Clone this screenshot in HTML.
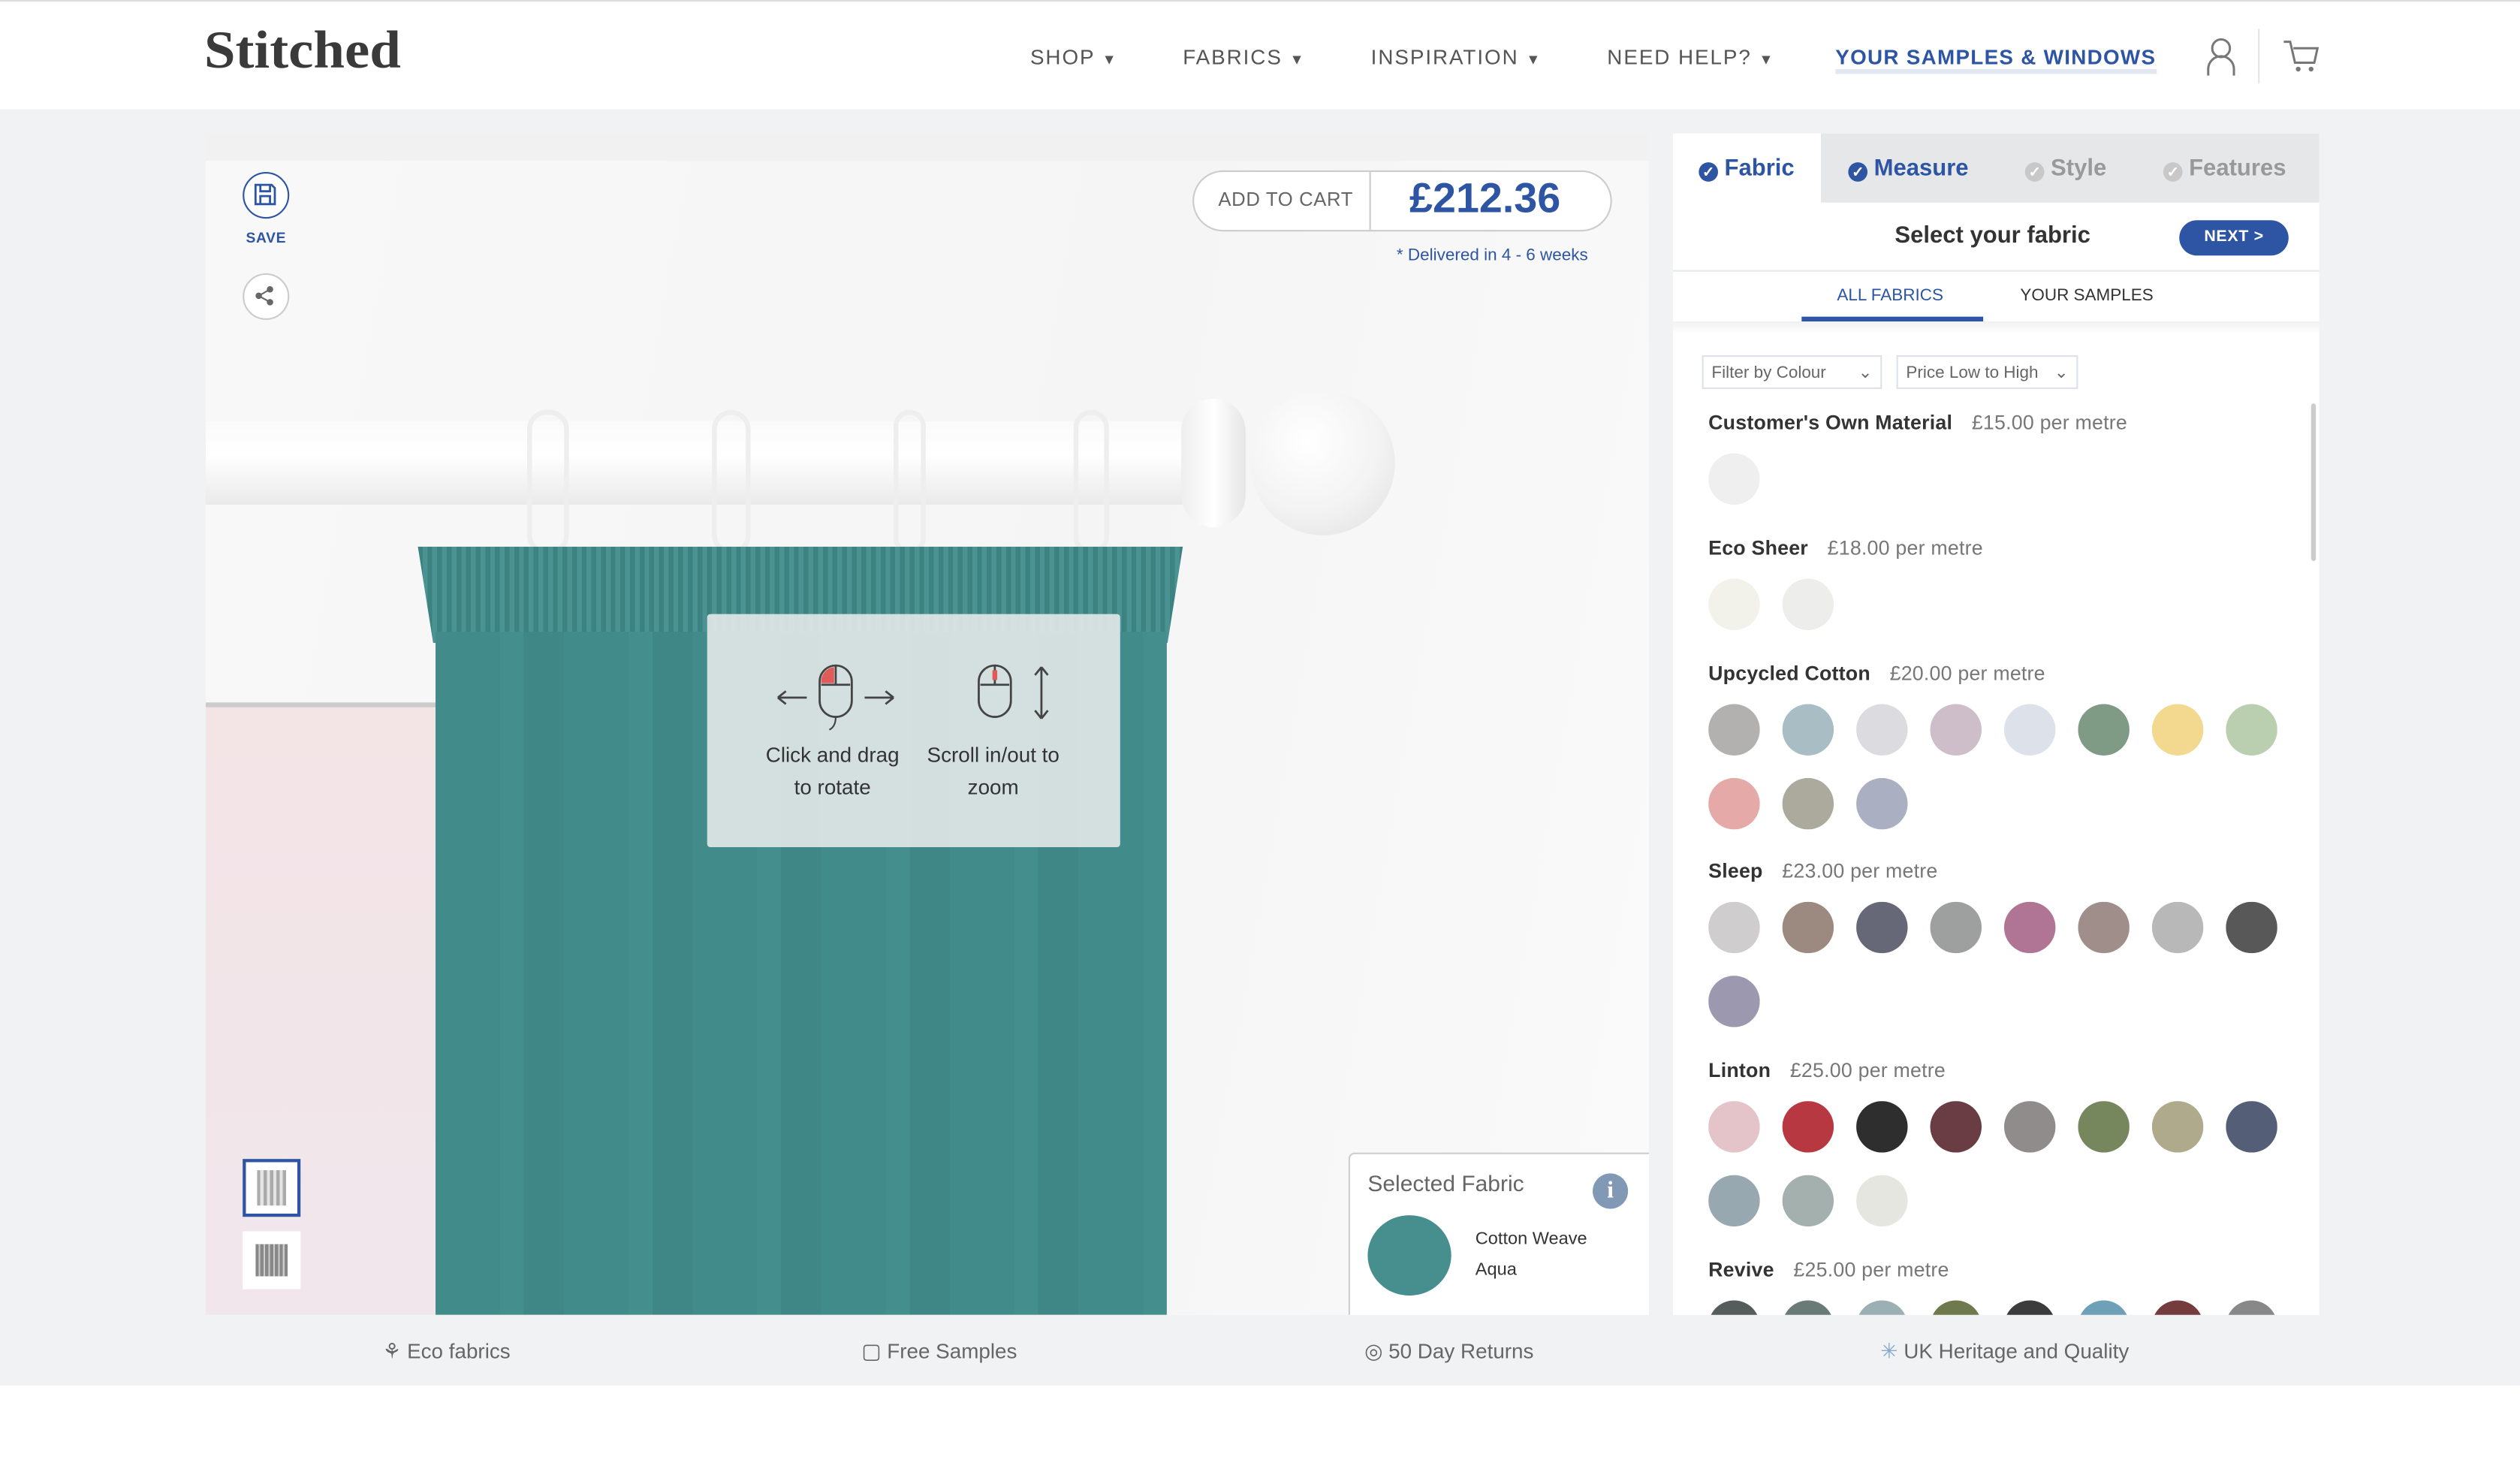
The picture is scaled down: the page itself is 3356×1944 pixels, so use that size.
<!DOCTYPE html>
<html><head><meta charset="utf-8"><style>
html,body{margin:0;padding:0;width:3356px;height:1944px;overflow:hidden;background:#fff}
#w{position:absolute;left:0;top:0;width:1568px;height:908px;transform:scale(2.14031);transform-origin:0 0;font-family:"Liberation Sans",sans-serif;color:#333}
.a{position:absolute}
.nav{font-size:13px;letter-spacing:.9px;color:#555;top:28px}
.sw{position:absolute;width:32px;height:32px;border-radius:50%}
.h{position:absolute;left:1063px;font-size:12.5px;font-weight:bold;color:#333;letter-spacing:.1px}
.h span{font-weight:normal;color:#777;margin-left:12px}
.ft{position:absolute;top:833px;font-size:13px;color:#666}
.ck{display:inline-block;width:12px;height:12px;border-radius:50%;vertical-align:-1px;margin-right:4px;color:#fff;font-size:9px;line-height:12px;text-align:center}
</style></head><body><div id="w">
<div class="a" style="left:0;top:0;width:1568px;height:1px;background:#ddd"></div>
<div class="a" style="left:0;top:68px;width:1568px;height:794px;background:#f1f2f4"></div>
<div class="a" style="left:127px;top:14px;font-family:'Liberation Serif',serif;font-weight:bold;font-size:33px;color:#3a3a3a;letter-spacing:0px;transform:scaleX(1.06);transform-origin:0 0">Stitched</div>
<div class="a nav" style="left:641px">SHOP <span style="font-size:9px">▼</span></div>
<div class="a nav" style="left:736px">FABRICS <span style="font-size:9px">▼</span></div>
<div class="a nav" style="left:853px">INSPIRATION <span style="font-size:9px">▼</span></div>
<div class="a nav" style="left:1000px">NEED HELP? <span style="font-size:9px">▼</span></div>
<div class="a nav" style="left:1142px;color:#2d55a3;font-weight:bold;border-bottom:3px solid #e2e8f2;letter-spacing:.6px">YOUR SAMPLES &amp; WINDOWS</div>
<svg class="a" style="left:1372px;top:22px" width="20" height="26"><circle cx="10" cy="8" r="5.5" fill="none" stroke="#777" stroke-width="1.4"/><path d="M2 25v-4a8 8 0 0 1 16 0v4" fill="none" stroke="#777" stroke-width="1.4"/></svg>
<div class="a" style="left:1405px;top:18px;width:1px;height:34px;background:#e5e5e5"></div>
<svg class="a" style="left:1420px;top:24px" width="24" height="22"><path d="M1 2h4l3 13h12l2-9H7" fill="none" stroke="#777" stroke-width="1.4"/><circle cx="10" cy="19" r="1.5" fill="#777"/><circle cx="18" cy="19" r="1.5" fill="#777"/></svg>

<!-- left panel -->
<div class="a" style="left:128px;top:83px;width:898px;height:735px;background:linear-gradient(100deg,#f8f8f8,#f5f5f5 60%,#fafafa);overflow:hidden">
 <div class="a" style="left:0;top:0;width:898px;height:17px;background:#f1f1f2"></div>
 <div class="a" style="left:0;top:355px;width:145px;height:380px;background:linear-gradient(#f3e4e6,#f0e6ec)"></div>
 <div class="a" style="left:0;top:354px;width:145px;height:3px;background:#ccc"></div>
 <div class="a" style="left:0;top:179px;width:620px;height:52px;background:linear-gradient(#fafafa,#fff 40%,#eaeaea);border-radius:0 10px 10px 0"></div>
 <div class="a" style="left:607px;top:165px;width:40px;height:80px;background:linear-gradient(90deg,#eee,#fff,#e6e6e6);border-radius:20px"></div>
 <div class="a" style="left:650px;top:160px;width:90px;height:90px;border-radius:50%;background:radial-gradient(circle at 40% 35%,#fff,#f3f3f3 55%,#dedede)"></div>
 <div class="a" style="left:200px;top:172px;width:20px;height:84px;border:3px solid #eee;border-radius:12px"></div>
 <div class="a" style="left:315px;top:172px;width:18px;height:84px;border:3px solid #eee;border-radius:12px"></div>
 <div class="a" style="left:428px;top:172px;width:14px;height:84px;border:3px solid #eee;border-radius:12px"></div>
 <div class="a" style="left:540px;top:172px;width:16px;height:84px;border:3px solid #eee;border-radius:12px"></div>
 <div class="a" style="left:132px;top:257px;width:476px;height:60px;background:repeating-linear-gradient(90deg,#3c8281 0 3px,#4a9392 3px 6px);clip-path:polygon(0 0,100% 0,98% 100%,2% 100%)"></div>
 <div class="a" style="left:143px;top:310px;width:455px;height:425px;background:repeating-linear-gradient(90deg,#418b8a 0 40px,#448e8d 40px 55px,#3f8786 55px 80px)"></div>
 <div class="a" style="left:312px;top:299px;width:257px;height:145px;background:rgba(232,236,235,.88);border-radius:2px"></div>
 <svg class="a" style="left:352px;top:328px" width="80" height="44"><path d="M4 23h18M4 23l5-4M4 23l5 4M58 23h18M76 23l-5-4M76 23l-5 4" stroke="#444" stroke-width="1.3" fill="none"/><rect x="30" y="3" width="20" height="32" rx="10" fill="none" stroke="#444" stroke-width="1.3"/><path d="M31 15h18M40 3v12" stroke="#444" stroke-width="1.3"/><path d="M39 4a9 9 0 0 0-8 10h8z" fill="#e05a5a"/><path d="M40 35q0 6-4 8" stroke="#444" fill="none"/></svg>
 <svg class="a" style="left:478px;top:328px" width="50" height="44"><rect x="3" y="3" width="20" height="32" rx="10" fill="none" stroke="#444" stroke-width="1.3"/><path d="M4 15h18M13 3v12" stroke="#444" stroke-width="1.3"/><path d="M13 6v6" stroke="#e05a5a" stroke-width="3"/><path d="M42 4v32M42 4l-4 5M42 4l4 5M42 36l-4-5M42 36l4-5" stroke="#444" stroke-width="1.3" fill="none"/></svg>
 <div class="a" style="left:345px;top:377px;width:90px;text-align:center;font-size:13px;line-height:20px;color:#333">Click and drag to rotate</div>
 <div class="a" style="left:444px;top:377px;width:92px;text-align:center;font-size:13px;line-height:20px;color:#333">Scroll in/out to zoom</div>
 <div class="a" style="left:23px;top:24px;width:27px;height:27px;border:1.3px solid #2d55a3;border-radius:50%;background:#fff"></div>
 <svg class="a" style="left:29px;top:30px" width="16" height="16"><path d="M2 2h10l2 2v10H2z M5 2v4h6V2 M5 14V9h6v5" fill="none" stroke="#2d55a3" stroke-width="1.3"/></svg>
 <div class="a" style="left:25px;top:60px;font-size:9px;font-weight:bold;color:#2d55a3;letter-spacing:.3px">SAVE</div>
 <div class="a" style="left:23px;top:87px;width:27px;height:27px;border:1px solid #ccc;border-radius:50%;background:#fff"></div>
 <svg class="a" style="left:29px;top:93px" width="16" height="16"><circle cx="11" cy="4" r="2" fill="#666"/><circle cx="4" cy="8" r="2" fill="#666"/><circle cx="11" cy="12" r="2" fill="#666"/><path d="M11 4L4 8l7 4" stroke="#666" fill="none"/></svg>
 <div class="a" style="left:614px;top:23px;width:259px;height:36px;border:1px solid #ccc;border-radius:19px;background:#fff"></div>
 <div class="a" style="left:724px;top:24px;width:1px;height:36px;background:#ccc"></div>
 <div class="a" style="left:630px;top:34px;font-size:12px;letter-spacing:.3px;color:#666">ADD TO CART</div>
 <div class="a" style="left:749px;top:25px;font-size:26px;font-weight:bold;color:#2d55a3">£212.36</div>
 <div class="a" style="left:741px;top:70px;font-size:10.5px;color:#2d55a3">* Delivered in 4 - 6 weeks</div>
 <div class="a" style="left:23px;top:638px;width:36px;height:36px;border:2px solid #2d55a3;background:#fff;box-sizing:border-box"></div>
 <div class="a" style="left:32px;top:645px;width:18px;height:22px;background:repeating-linear-gradient(90deg,#aaa 0 2px,#e4e4e4 2px 4px)"></div>
 <div class="a" style="left:23px;top:683px;width:36px;height:36px;background:#fff"></div>
 <div class="a" style="left:31px;top:691px;width:20px;height:20px;background:repeating-linear-gradient(90deg,#888 0 2px,#ccc 2px 3px)"></div>
 <div class="a" style="left:711px;top:634px;width:186px;height:101px;border:1px solid #ccc;border-bottom:none;background:#fff;border-radius:4px 0 0 0"></div>
 <div class="a" style="left:723px;top:645px;font-size:14px;color:#666">Selected Fabric</div>
 <div class="a" style="left:863px;top:647px;width:22px;height:22px;border-radius:50%;background:#8199b5;color:#fff;font-family:'Liberation Serif',serif;font-weight:bold;font-size:15px;text-align:center;line-height:22px">i</div>
 <div class="a" style="left:723px;top:673px;width:52px;height:50px;border-radius:50%;background:#478f8e"></div>
 <div class="a" style="left:790px;top:682px;font-size:11px;color:#333">Cotton Weave</div>
 <div class="a" style="left:790px;top:701px;font-size:11px;color:#333">Aqua</div>
</div>

<div class="a" style="left:1041px;top:83px;width:402px;height:735px;background:#fff;overflow:hidden">
 <div class="a" style="left:92px;top:0;width:310px;height:43px;background:#e6e7e9"></div>
 <div class="a" style="left:16px;top:14px;font-size:14.5px;font-weight:bold;color:#2d55a3"><span class="ck" style="background:#2d55a3">✓</span>Fabric</div>
 <div class="a" style="left:109px;top:14px;font-size:14.5px;font-weight:bold;color:#2d55a3"><span class="ck" style="background:#2d55a3">✓</span>Measure</div>
 <div class="a" style="left:219px;top:14px;font-size:14.5px;font-weight:bold;color:#999"><span class="ck" style="background:#c8c8c8">✓</span>Style</div>
 <div class="a" style="left:305px;top:14px;font-size:14.5px;font-weight:bold;color:#999"><span class="ck" style="background:#c8c8c8">✓</span>Features</div>
 <div class="a" style="left:138px;top:56px;font-size:14.5px;font-weight:bold;color:#333">Select your fabric</div>
 <div class="a" style="left:315px;top:54px;width:68px;height:22px;border-radius:11px;background:#2d55a3;color:#fff;font-size:10px;font-weight:bold;text-align:center;line-height:22px;letter-spacing:.3px">NEXT &gt;</div>
 <div class="a" style="left:0;top:85px;width:402px;height:1px;background:#e6e7e9"></div>
 <div class="a" style="left:102px;top:95px;font-size:10.5px;color:#2d55a3">ALL FABRICS</div>
 <div class="a" style="left:216px;top:95px;font-size:10.5px;color:#333">YOUR SAMPLES</div>
 <div class="a" style="left:80px;top:114px;width:113px;height:3px;background:#2d55a3"></div>
 <div class="a" style="left:0;top:117px;width:402px;height:8px;background:linear-gradient(#f1f1f2,#fff)"></div>
 <div class="a" style="left:18px;top:138px;width:112px;height:21px;border:1px solid #dde2ea;font-size:10.5px;color:#666;line-height:21px;padding-left:5px;box-sizing:border-box">Filter by Colour <span style="float:right;margin-right:5px">⌄</span></div>
 <div class="a" style="left:139px;top:138px;width:113px;height:21px;border:1px solid #dde2ea;font-size:10.5px;color:#666;line-height:21px;padding-left:5px;box-sizing:border-box">Price Low to High <span style="float:right;margin-right:5px">⌄</span></div>
 <div class="a" style="left:397px;top:168px;width:3px;height:98px;background:#ccc;border-radius:2px"></div>
</div>
<div class="h" style="top:256px">Customer's Own Material<span>£15.00 per metre</span></div>
<div class="h" style="top:334px">Eco Sheer<span>£18.00 per metre</span></div>
<div class="h" style="top:412px">Upcycled Cotton<span>£20.00 per metre</span></div>
<div class="h" style="top:535px">Sleep<span>£23.00 per metre</span></div>
<div class="h" style="top:659px">Linton<span>£25.00 per metre</span></div>
<div class="h" style="top:783px">Revive<span>£25.00 per metre</span></div>
<div id="sw"></div>
<script>
var rows=[[282,["#efefef"]],[360,["#f2f2ea","#ededeb"]],[438,["#b3b1b0","#a9bec4","#dcdbe0","#cdbec9","#dde1ea","#7f9a85","#f2d98f","#b9cfb0"]],[484,["#e5a9a8","#acaa9c","#aab0c2"]],[561,["#cfcdcd","#9c8a80","#666878","#9ea0a0","#b07494","#a08e8a","#b8b8b8","#585858"]],[607,["#9c98b0"]],[685,["#e4c4c8","#b83842","#2e2e2e","#6a3c44","#908c8c","#76875e","#b0aa8c","#545e76"]],[731,["#98a8b0","#a4b0ae","#e6e6e0"]],[809,["#555c5c","#6a7a76","#9cb0b4","#6e7a4e","#3c3c3c","#6ea0b8","#743c3c","#888"]]];
var h='';rows.forEach(function(r){r[1].forEach(function(c,i){var t=r[0],hh=32;if(t+32>818)hh=818-t;h+='<div class="a" style="left:'+(1063+46*i)+'px;top:'+t+'px;width:32px;height:'+hh+'px;overflow:hidden"><div class="sw" style="left:0;top:0;background:'+c+'"></div></div>';});});
document.getElementById('sw').innerHTML=h;
</script>
<div class="ft" style="left:238px">⚘ Eco fabrics</div>
<div class="ft" style="left:536px">▢ Free Samples</div>
<div class="ft" style="left:849px">◎ 50 Day Returns</div>
<div class="ft" style="left:1170px"><span style="color:#8aa8d0">✳</span> UK Heritage and Quality</div>
</div></body></html>
